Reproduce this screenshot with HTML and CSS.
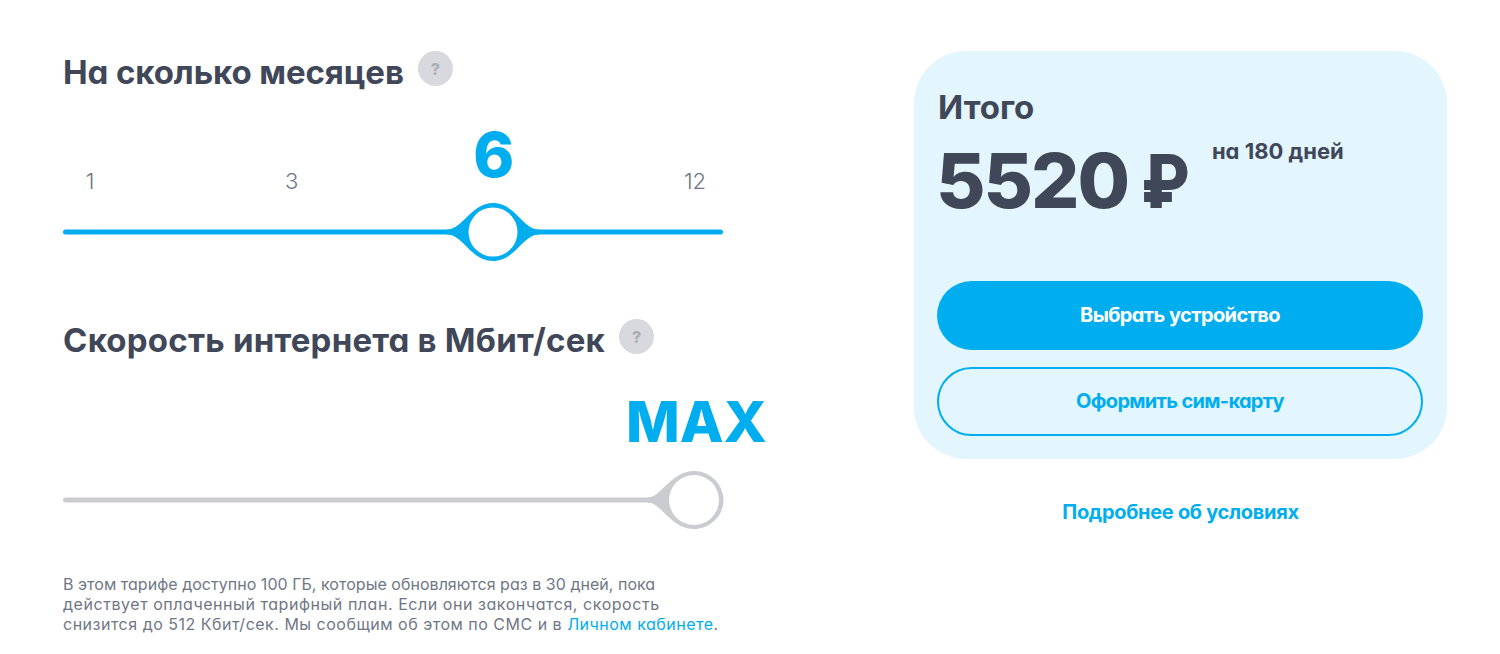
FILE: index.html
```html
<!DOCTYPE html>
<html lang="ru">
<head>
<meta charset="utf-8">
<title>Тариф</title>
<link rel="stylesheet" href="styles.css">
</head>
<body>
<main class="page">
  <section class="config">
    <div class="heading-row">
      <h2 class="heading heading-short">На сколько месяцев</h2>
      <span class="help">?</span>
    </div>
    <div class="scale">
      <span class="tick">1</span>
      <span class="tick">3</span>
      <span class="tick tick-active">6</span>
      <span class="tick">12</span>
    </div>
    <svg class="slider" width="660" height="60" viewBox="0 0 660 60">
      <rect x="0" y="27.5" width="660" height="5" rx="2.5" fill="#00aef0"/>
      <path d="M384 27.5C400 27.5 408 1 430 1C452 1 460 27.5 476 27.5V32.5C460 32.5 452 59 430 59C408 59 400 32.5 384 32.5Z" fill="#00aef0"/>
      <circle cx="430" cy="30" r="24.5" fill="#fff"/>
    </svg>
    <div class="heading-row heading-row-second">
      <h2 class="heading heading-long">Скорость интернета в Мбит/сек</h2>
      <span class="help">?</span>
    </div>
    <div class="max">MAX</div>
    <svg class="slider" width="661" height="60" viewBox="0 0 661 60">
      <rect x="0" y="27.5" width="600" height="5" rx="2.5" fill="#cbccd2"/>
      <path d="M585 27.5C598 27.5 608 1 631 1C647 1 660.500 14 660.500 30C660.500 46 647 59 631 59C608 59 598 32.5 585 32.5Z" fill="#cbccd2"/>
      <circle cx="631" cy="30" r="25" fill="#fff"/>
    </svg>
    <p class="note">
      <span class="note-line note-line-a">В этом тарифе доступно 100 ГБ, которые обновляются раз в 30 дней, пока</span>
      <span class="note-line note-line-b">действует оплаченный тарифный план. Если они закончатся, скорость</span>
      <span class="note-line note-line-c">снизится до 512 Кбит/сек. Мы сообщим об этом по СМС и в <a class="link" href="#">Личном кабинете</a>.</span>
    </p>
  </section>
  <aside class="summary">
    <div class="card">
      <div class="total-label">Итого</div>
      <div class="price-row">
        <span class="price">5520 <span class="ruble">₽</span></span>
        <span class="period">на 180 дней</span>
      </div>
      <a class="btn btn-primary" href="#">Выбрать устройство</a>
      <a class="btn btn-outline" href="#">Оформить сим-карту</a>
    </div>
    <a class="more" href="#">Подробнее об условиях</a>
  </aside>
</main>
</body>
</html>
```
FILE: styles.css
```css
* { box-sizing: border-box; }
html, body { margin: 0; padding: 0; background: #fff; }
body {
  font-family: Inter, "Noto Sans", sans-serif;
  font-feature-settings: "cv11" 1;
  color: #3f4759;
  height: 654px;
  overflow: hidden;
}
.page {
  display: flex;
  padding: 51px 53px 0 63px;
  justify-content: space-between;
}
.config { width: 660px; }
.heading-row {
  display: flex;
  align-items: flex-start;
  gap: 14px;
  height: 46px;
}
.heading {
  margin: 0;
  font-size: 33px;
  line-height: 42px;
  font-weight: 700;
  white-space: nowrap;
}
.heading-short { letter-spacing: -0.1px; }
.heading-long { letter-spacing: 0.22px; }
.help {
  width: 35px;
  height: 35px;
  border-radius: 50%;
  background: #d7d9de;
  color: #a9adb8;
  font-size: 16px;
  font-weight: 800;
  display: flex;
  align-items: center;
  justify-content: center;
}
.scale {
  display: flex;
  justify-content: space-between;
  align-items: flex-end;
  padding: 0 8px 0 7px;
  height: 102px;
  margin-bottom: 5px;
  margin-top: -2px;
}
.tick {
  width: 40px;
  text-align: center;
  font-size: 22px;
  line-height: 24px;
  font-weight: 300;
  color: #6f7785;
  margin-bottom: 4px;
}
.tick-active {
  font-size: 62px;
  line-height: 60px;
  font-weight: 800;
  color: #00aef0;
  margin-bottom: 12px;
}
.slider { display: block; }
.heading-row-second { margin-top: 57px; }
.max {
  text-align: right;
  width: 704px;
  font-size: 57px;
  line-height: 62px;
  font-weight: 800;
  color: #00aef0;
  margin-top: 26px;
  margin-bottom: 17px;
}
.note {
  margin: 44px 0 0;
  font-size: 16px;
  line-height: 20px;
  color: #6f7785;
  white-space: nowrap;
}
.note-line { display: block; }
.note-line-a { letter-spacing: 0.03px; }
.note-line-b { letter-spacing: 0.55px; }
.note-line-c { letter-spacing: 0.5px; }
.link { color: #00aef0; text-decoration: none; }
.summary { width: 533px; }
.card {
  height: 408px;
  background: #e3f5fd;
  border-radius: 52px;
  padding: 34px 24px 0 23px;
}
.total-label {
  font-size: 33px;
  line-height: 44px;
  font-weight: 700;
  margin-left: 1px;
}
.price-row {
  display: flex;
  align-items: flex-start;
  gap: 17px;
  height: 152px;
  margin-left: -1px;
}
.price {
  font-size: 76px;
  line-height: 80px;
  font-weight: 800;
  letter-spacing: -2px;
  word-spacing: -1px;
  white-space: nowrap;
  margin-top: 11px;
}
.ruble {
  display: inline-block;
  font-family: Roboto, sans-serif;
  font-weight: 900;
  transform: scaleX(0.87);
  transform-origin: left center;
}
.period {
  font-size: 22px;
  line-height: 26px;
  font-weight: 700;
  margin-top: 9px;
}
.btn {
  display: flex;
  align-items: center;
  justify-content: center;
  height: 69px;
  border-radius: 35px;
  font-size: 20px;
  font-weight: 700;
  text-decoration: none;
}
.btn-primary { background: #00aef0; color: #fff; letter-spacing: -0.6px; padding-bottom: 2px; }
.btn-outline {
  margin-top: 17px;
  border: 2px solid #00aef0;
  color: #00aef0;
  letter-spacing: -0.7px;
  padding-bottom: 1px;
}
.more {
  display: block;
  margin-top: 40px;
  text-align: center;
  font-size: 20px;
  line-height: 26px;
  font-weight: 700;
  letter-spacing: -0.3px;
  color: #00aef0;
  text-decoration: none;
}
```
